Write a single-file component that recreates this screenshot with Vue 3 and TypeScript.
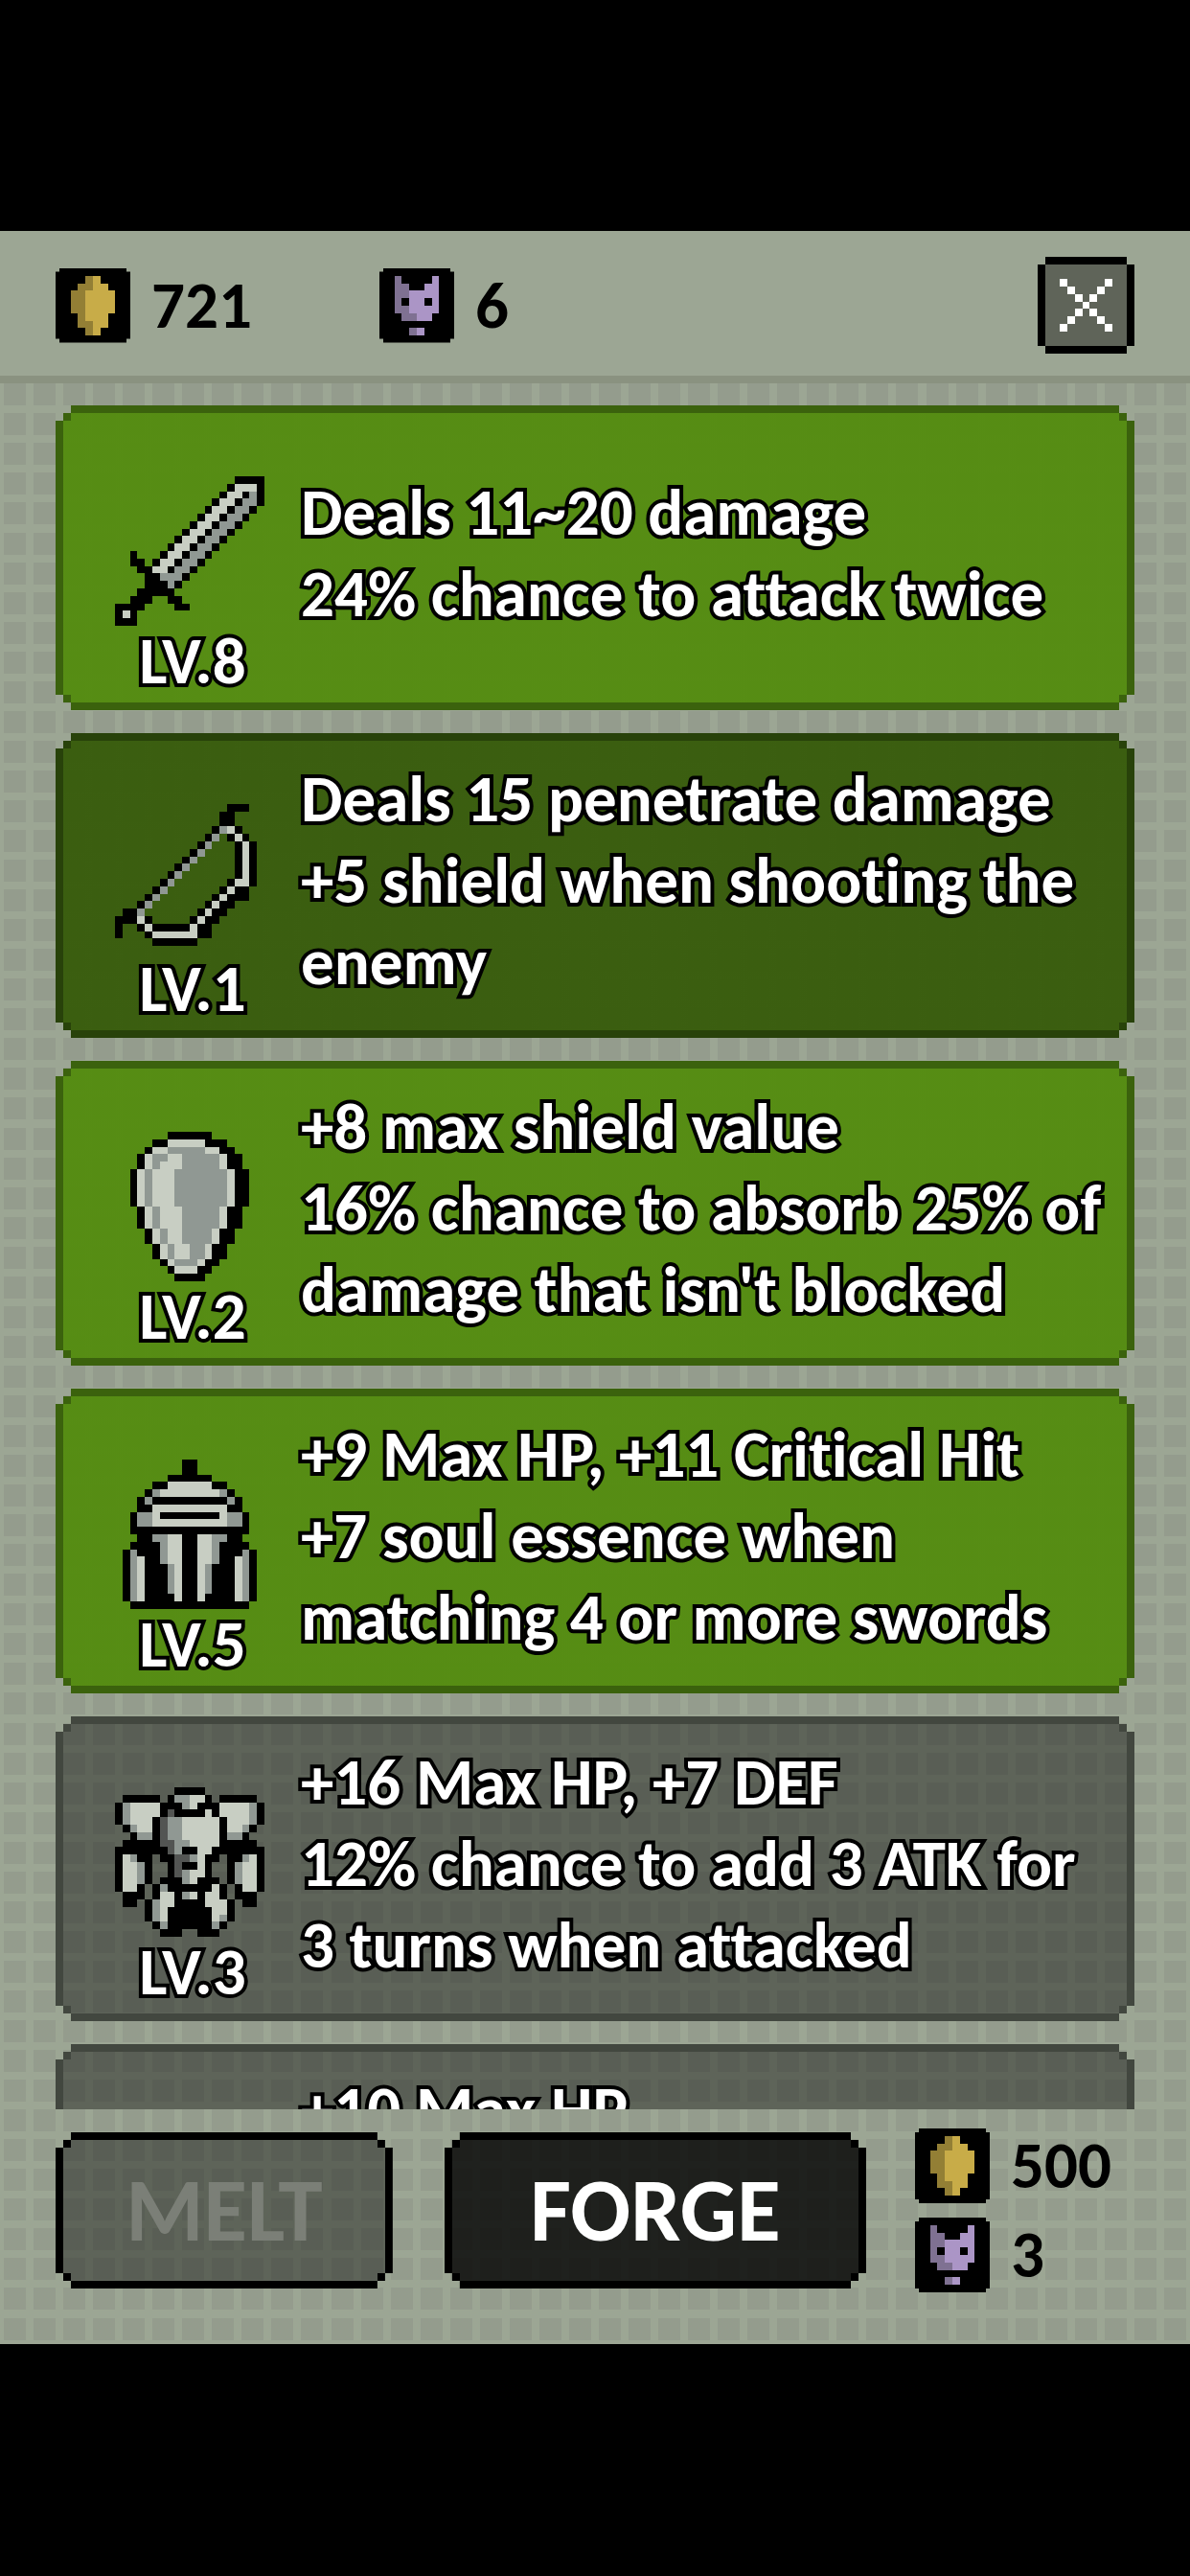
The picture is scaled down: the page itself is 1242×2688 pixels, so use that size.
<script setup lang="ts">
import { computed, defineComponent, h, type PropType } from 'vue'

type Tone = 'green' | 'deep' | 'grey'

interface Equipment {
  name: string
  level?: number
  tone: Tone
  sprite: string[]
  lines: string[]
}

/* Sprites are pixel maps: one string per row, one letter per pixel. */
const INK: Record<string, string> = {
  '#': '#000000',
  L: '#c8cec3',
  D: '#909893',
  S: '#535553',
  G: '#c8ac48',
  g: '#937f35',
  P: '#ab95c6',
  p: '#7f7192',
  W: '#ffffff',
}

const PixelArt = defineComponent({
  props: {
    rows: { type: Array as PropType<string[]>, required: true },
    size: { type: Number, required: true },
  },
  setup(props) {
    const paths = computed(() => {
      const byInk: Record<string, string> = {}
      props.rows.forEach((row, y) => {
        for (const run of row.matchAll(/([^. ])\1*/g)) {
          const n = run[0].length
          byInk[run[1]] = (byInk[run[1]] ?? '') + `M${run.index} ${y}h${n}v1h-${n}z`
        }
      })
      return Object.entries(byInk)
    })
    return () =>
      h(
        'svg',
        { viewBox: `0 0 ${props.size} ${props.size}`, 'shape-rendering': 'crispEdges', 'aria-hidden': 'true' },
        paths.value.map(([ink, d]) => h('path', { d, fill: INK[ink] })),
      )
  },
})

const coin = [
  '',
  '....gG',
  '...ggGG',
  '..ggGGGG',
  '..ggGGGG',
  '..ggGGGG',
  '...gGGG',
  '...ggGG',
  '....gG',
]

const soul = [
  '',
  '..p....P',
  '..pp..PP',
  '..ppPPPP',
  '..p.PP.P',
  '..ppPPPP',
  '...ppPP',
  '',
  '....pP',
]

const cross = [
  'W.....W',
  '.W...W',
  '..W.W',
  '...W',
  '..W.W',
  '.W...W',
  'W.....W',
]

const sword = [
  '................####',
  '...............#LLL#',
  '..............#LL#D#',
  '.............#LL#DD#',
  '............#LL#DD#',
  '...........#LL#DD#',
  '..........#LL#DD#',
  '.........#LL#DD#',
  '........#LL#DD#',
  '.......#LL#DD#',
  '..#...#LL#DD#',
  '..##.#LL#DD#',
  '...##LL#DD#',
  '....##DDD#',
  '....###D#',
  '...#####',
  '..###..##',
  '####....##',
  '#L#',
  '###',
]

const bow = [
  '...............###',
  '..............##',
  '..............##',
  '.............#DL#',
  '............#D.#L#',
  '...........#D...#L#',
  '..........#D....#L#',
  '.........#D.....#L#',
  '........#D......#L#',
  '.......#D.......#L#',
  '......#D.......#LL#',
  '.....#D.......#L##',
  '....#D.......#L###',
  '...#D.......#L##',
  '.##D.......#L##',
  '###L#.....#L##',
  '#..#L#####L##',
  '#...#LLLLLL##',
  '.....######',
]

const shield = [
  '.......######',
  '.....##LLLLL###',
  '....#LLDDDDDLL##',
  '...#LDDLLDDDDDL##',
  '...#LDLLLDDDDDL##',
  '..#LDLLLDDDDDDDL##',
  '..#LDLLLDDDDDDDL##',
  '..#LDLLLDDDDDDDL##',
  '..#LDLLLDDDDDDDL##',
  '..#LDLLLDDDDDDDL##',
  '...#LDLLLDDDDDL##',
  '...#LDLLLDDDDDL##',
  '...#LDLLLDDDDDL##',
  '....#LDLLDDDDL##',
  '....#LDLLDDDDL##',
  '.....#LDLLDDL##',
  '.....#LDLLDDL##',
  '......#LDDDL##',
  '.......#LLL##',
  '........####',
]

const helmet = [
  '.........##',
  '.........##',
  '.......######',
  '.....##LLLLLL##',
  '....#DLLLLLLLLD#',
  '...#D##########D#',
  '...##LLLLLLLLLL##',
  '..#DDL########LDD#',
  '..#DDLLLLLLLLLLDD#',
  '..################',
  '...##DDLL##LLDD##',
  '..####DLL##LLD####',
  '.#D###DLL##LLD###D#',
  '.#DL##DLL##LLD##LD#',
  '.#DL###DL##LD###LD#',
  '.#DL###DL##LD###LD#',
  '.#DL###DL##LD###LD#',
  '.#DL###DL##LD###LD#',
  '.#DL####L##L####LD#',
  '..################',
]

const armor = [
  '........####',
  '.#####.#DDLL#.#####',
  '#DLLLL###DL###LLLLD#',
  '#DLLLL#S####L#LLLLD#',
  '#DLLL#SDDLLLLL#LLLD#',
  '.#DLL#SDDLLLLL#LLD#',
  '..#DD#SDDLLLLL#DD#',
  '.#####SSDDLLLL#####',
  '#######SD##LL#######',
  '#LD##.##SSDL##.##DL#',
  '#LLD#..#S##L#..#DLL#',
  '#LLD#..#SDLL#..#DLL#',
  '#LLD#.###DL###.#DLL#',
  '#LL#.#D######L#.#LL#',
  '.###.#LL#DL#LL#.###',
  '.##.#DLL####LLL#.##',
  '....#DL######LL#',
  '....#DL######LD#',
  '.....#D######D#',
  '......###..###',
]

const wallet = [
  { name: 'Gold', amount: 721, icon: coin },
  { name: 'Soul essence', amount: 6, icon: soul },
]

const forgeCost = [
  { name: 'Gold', amount: 500, icon: coin },
  { name: 'Soul essence', amount: 3, icon: soul },
]

const equipment: Equipment[] = [
  { name: 'Sword', level: 8, tone: 'green', sprite: sword, lines: ['Deals 11~20 damage', '24% chance to attack twice'] },
  {
    name: 'Bow',
    level: 1,
    tone: 'deep',
    sprite: bow,
    lines: ['Deals 15 penetrate damage', '+5 shield when shooting the', 'enemy'],
  },
  {
    name: 'Shield',
    level: 2,
    tone: 'green',
    sprite: shield,
    lines: ['+8 max shield value', '16% chance to absorb 25% of', "damage that isn't blocked"],
  },
  {
    name: 'Helmet',
    level: 5,
    tone: 'green',
    sprite: helmet,
    lines: ['+9 Max HP, +11 Critical Hit', '+7 soul essence when', 'matching 4 or more swords'],
  },
  {
    name: 'Armor',
    level: 3,
    tone: 'grey',
    sprite: armor,
    lines: ['+16 Max HP, +7 DEF', '12% chance to add 3 ATK for', '3 turns when attacked'],
  },
  { name: 'Accessory', tone: 'grey', sprite: [], lines: ['+10 Max HP'] },
]
</script>

<template>
  <div class="screen">
    <main class="forge">
      <header class="topbar">
        <div v-for="item in wallet" :key="item.name" class="currency wallet">
          <PixelArt class="token" :rows="item.icon" :size="10" />
          <span>{{ item.amount }}</span>
        </div>
        <button type="button" class="close" aria-label="Close">
          <PixelArt class="cross" :rows="cross" :size="7" />
        </button>
      </header>

      <ul class="list">
        <li v-for="item in equipment" :key="item.name" class="card notched" :class="item.tone">
          <div class="item">
            <PixelArt class="sprite" :rows="item.sprite" :size="20" />
            <span v-if="item.level" class="level outlined">LV.{{ item.level }}</span>
          </div>
          <p class="stats outlined" :class="{ short: item.lines.length === 2 }">
            <span v-for="line in item.lines" :key="line">{{ line }}</span>
          </p>
        </li>
      </ul>

      <footer class="actions">
        <button type="button" class="action melt notched" disabled>MELT</button>
        <button type="button" class="action go notched">FORGE</button>
        <div class="costs">
          <div v-for="item in forgeCost" :key="item.name" class="currency">
            <PixelArt class="token" :rows="item.icon" :size="10" />
            <span>{{ item.amount }}</span>
          </div>
        </div>
      </footer>
    </main>
  </div>
</template>

<style>
body {
  margin: 0;
  background: #000;
}
</style>

<style scoped>
.screen {
  box-sizing: border-box;
  display: flex;
  height: 100vh;
  padding: 241px 0 242px;
  background: #000;
  font-family: Calibri, Carlito, 'Noto Sans CJK SC', 'Open Sans', sans-serif;
  font-size: 69px;
  font-weight: 700;
  font-variant-ligatures: none;
  line-height: 85px;
  color: #000;
}

.forge {
  --tile: calc(100vw / 40);
  --rule: #9ca694;
  flex: 1;
  min-width: 0;
  display: flex;
  flex-direction: column;
  background:
    repeating-linear-gradient(90deg, var(--rule) 0 4px, transparent 4px 27px, var(--rule) 27px var(--tile)),
    repeating-linear-gradient(180deg, var(--rule) 0 4px, transparent 4px 27px, var(--rule) 27px var(--tile)),
    #949c8d;
}

.topbar {
  display: flex;
  padding: 27px 58px 23px;
  background: #9ca694;
  border-bottom: 8px solid #8a9280;
}

.currency {
  display: flex;
  align-items: center;
  gap: 22px;
  line-height: 78px;
}

.wallet {
  min-width: 338px;
}

.token {
  width: 78px;
  height: 78px;
  background: #000;
  clip-path: polygon(4px 0, calc(100% - 4px) 0, calc(100% - 4px) 4px, 100% 4px, 100% calc(100% - 4px), calc(100% - 4px) calc(100% - 4px), calc(100% - 4px) 100%, 4px 100%, 4px calc(100% - 4px), 0 calc(100% - 4px), 0 4px, 4px 4px);
}

.close {
  box-sizing: border-box;
  display: grid;
  place-items: center;
  width: 101px;
  height: 101px;
  margin-left: auto;
  padding: 0;
  border: 8px solid #000;
  background: #5f6459;
  clip-path: polygon(8px 0, calc(100% - 8px) 0, calc(100% - 8px) 8px, 100% 8px, 100% calc(100% - 8px), calc(100% - 8px) calc(100% - 8px), calc(100% - 8px) 100%, 8px 100%, 8px calc(100% - 8px), 0 calc(100% - 8px), 0 8px, 8px 8px);
}

.cross {
  width: 55px;
  height: 55px;
}

/* Panel with stepped pixel corners: an edge, and one edge pixel inside each corner. */
.notched {
  --dot: linear-gradient(var(--edge), var(--edge));
  box-sizing: border-box;
  border: 8px solid var(--edge);
  background:
    var(--dot) left top / 8px 8px no-repeat padding-box,
    var(--dot) right top / 8px 8px no-repeat padding-box,
    var(--dot) left bottom / 8px 8px no-repeat padding-box,
    var(--dot) right bottom / 8px 8px no-repeat padding-box,
    linear-gradient(var(--fill), var(--fill)) padding-box;
  clip-path: polygon(16px 0, calc(100% - 16px) 0, calc(100% - 16px) 8px, calc(100% - 8px) 8px, calc(100% - 8px) 16px, 100% 16px, 100% calc(100% - 16px), calc(100% - 8px) calc(100% - 16px), calc(100% - 8px) calc(100% - 8px), calc(100% - 16px) calc(100% - 8px), calc(100% - 16px) 100%, 16px 100%, 16px calc(100% - 8px), 8px calc(100% - 8px), 8px calc(100% - 16px), 0 calc(100% - 16px), 0 16px, 8px 16px, 8px 8px, 16px 8px);
}

.list {
  flex: 1;
  min-height: 0;
  display: flex;
  flex-direction: column;
  gap: 24px;
  margin: 0;
  padding: 23px 58px 0;
  overflow-y: auto;
  scrollbar-width: none;
  list-style: none;
}

.card {
  flex: none;
  display: flex;
  gap: 38px;
  min-height: 318px;
  padding: 0 20px 0 54px;
}

.green {
  --edge: #3b620d;
  --fill: rgb(84 140 16 / 97%);
}

.deep {
  --edge: #28420a;
  --fill: rgb(56 92 12 / 97%);
}

.grey {
  --edge: #42473f;
  --fill: rgb(0 0 0 / 40%);
}

.item {
  display: flex;
  flex-direction: column;
  align-items: center;
  width: 156px;
  padding-top: 66px;
}

.sprite {
  width: 156px;
  height: 156px;
}

.level {
  padding-left: 6px;
  line-height: 74px;
}

.outlined {
  color: #fff;
  -webkit-text-stroke: 8px #000;
  paint-order: stroke fill;
}

.stats {
  display: flex;
  flex-direction: column;
  margin: 0;
  padding-top: 18px;
  white-space: nowrap;
}

.short {
  padding-top: 61px;
}

.actions {
  display: flex;
  align-items: center;
  padding: 20px 58px 54px;
}

.action {
  height: 163px;
  padding: 0;
  font: inherit;
  font-size: 93px;
}

.melt {
  --edge: #000;
  --fill: rgb(0 0 0 / 40%);
  flex: 350 1 0;
  margin-right: 54px;
  color: #7b7f77;
}

.go {
  --edge: #000;
  --fill: rgb(0 0 0 / 80%);
  flex: 442 1 0;
  color: #fff;
}

.costs {
  display: flex;
  flex-direction: column;
  gap: 15px;
  width: 229px;
  margin-left: 51px;
}
</style>
